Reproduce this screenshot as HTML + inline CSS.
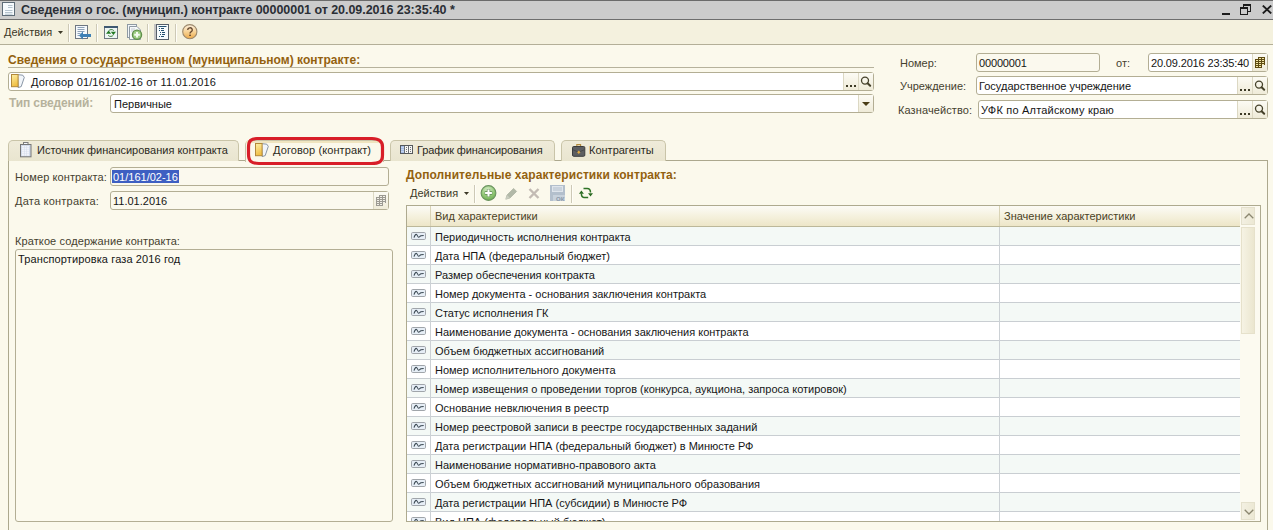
<!DOCTYPE html>
<html><head><meta charset="utf-8">
<style>
*{box-sizing:border-box}
html,body{margin:0;padding:0}
body{width:1273px;height:530px;overflow:hidden;position:relative;background:#fbf9ec;font-family:"Liberation Sans",sans-serif;font-size:11px;color:#1e1e1e}
.a{position:absolute}
.t{position:absolute;white-space:nowrap;line-height:13px}
.sep{position:absolute;width:2px;border-left:1px solid #cdc9b6;border-right:1px solid #fffef8}
.inp{position:absolute;background:#fff;border:1px solid #b3ae94;border-radius:3px;height:19px}
.btn{position:absolute;top:0;bottom:0;width:15px;border-left:1px solid #dcd8c3;background:linear-gradient(#fcfbf4,#efebd8)}
.lbl{color:#45412f}
.val{color:#151515}
.hdr{font-weight:bold;font-size:12px;color:#93610f;letter-spacing:0.03px}
.tab{position:absolute;top:140px;height:21px;border:1px solid #c9c4a8;border-bottom:none;border-radius:5px 5px 0 0;background:linear-gradient(#efebd9,#e9e5cf)}
.tab .t{color:#2b2a22;top:3px}
.row{position:absolute;left:0;width:833px;height:19px;border-bottom:1px solid #c9ced2}
.row .ic{position:absolute;left:4px;top:5px}
.row .tx{position:absolute;left:28px;top:4px;white-space:nowrap;line-height:13px;color:#161616}
.row .c1{position:absolute;left:23px;top:0;bottom:-1px;width:1px;background:#ccd1d5}
.row .c2{position:absolute;left:592px;top:0;bottom:-1px;width:1px;background:#ccd1d5}
</style></head><body>
<div class="a" style="left:0;top:0;width:1273px;height:20px;background:#cccccc;border-top:1px solid #6b6b6b;border-bottom:1px solid #6e6e6e"></div>
<svg class="a" style="left:2px;top:2px" width="13" height="14" viewBox="0 0 13 14">
  <rect x="0.5" y="0.5" width="12" height="13" fill="#f7fbfe" stroke="#5f6d79"/>
  <path d="M6 3.5h4.5M6 5.5h4.5M3 8.5h7.5M3 10.5h7.5M3 12.2h7.5" stroke="#aebdc9" stroke-width="0.9"/>
</svg>
<div class="t" style="left:21px;top:4px;font-weight:bold;font-size:12.5px;color:#2a2e35;letter-spacing:-0.04px">Сведения о гос. (муницип.) контракте 00000001 от 20.09.2016 23:35:40 *</div>
<div class="a" style="left:1222px;top:13px;width:8px;height:2px;background:#1c1c1c"></div>
<div class="a" style="left:1243px;top:4px;width:8px;height:8px;border:1px solid #1c1c1c;border-top-width:2px"></div>
<div class="a" style="left:1240px;top:7px;width:8px;height:8px;border:1px solid #1c1c1c;border-top-width:2px;background:#cccccc"></div>
<svg class="a" style="left:1262px;top:5px" width="10" height="9" viewBox="0 0 10 9"><path d="M0.8 0.6L9.2 8.4M9.2 0.6L0.8 8.4" stroke="#1c1c1c" stroke-width="1.9"/></svg>
<div class="a" style="left:0;top:20px;width:1273px;height:25px;background:#f4f1de;border-bottom:1px solid #b3af98"></div>
<div class="t" style="left:4px;top:26px;color:#3d3928">Действия</div>
<svg class="a" style="left:58px;top:31px" width="5" height="3" viewBox="0 0 5 3"><path d="M0 0h5L2.5 3z" fill="#3d3928"/></svg>
<div class="sep" style="left:68px;top:24px;height:18px"></div>
<svg class="a" style="left:75px;top:25px" width="17" height="16" viewBox="0 0 17 16">
  <rect x="0.5" y="0.5" width="12" height="13" fill="#f5f9fc" stroke="#6e7781"/>
  <path d="M2.5 2.5h7M2.5 4.5h7M2.5 6.5h7M2.5 8.5h3M2.5 10.5h2" stroke="#8ea2b8"/>
  <path d="M4 10.5l4-4v2.5h8v3H8V14.5z" fill="#3e80b5"/>
</svg>
<div class="sep" style="left:96px;top:24px;height:18px"></div>
<svg class="a" style="left:104px;top:26px" width="14" height="13" viewBox="0 0 14 13">
  <rect x="0.5" y="0.5" width="13" height="12" fill="#eef6f4" stroke="#707880"/>
  <rect x="0" y="0" width="14" height="2" fill="#405a72"/>
  <path d="M2 7.8l2.6-3.2 2.6 3.2z M6.8 5.8l2.6 3.2 2.6-3.2z" fill="#237a23"/>
  <path d="M4.6 5a3.4 3.4 0 0 1 5.2-0.4M9.4 9a3.4 3.4 0 0 1-5.2 0.4" stroke="#3d7d3d" fill="none"/>
</svg>
<svg class="a" style="left:127px;top:24px" width="16" height="16" viewBox="0 0 16 16">
  <rect x="0.5" y="0.5" width="9" height="13" fill="#f2f6f9" stroke="#8f9aa3"/>
  <path d="M2.5 2.5H10L13.5 6V15.5H2.5Z" fill="#f7f9fb" stroke="#8f9aa3"/>
  <path d="M4 5h4M4 7h3" stroke="#c5ccd3"/>
  <circle cx="10" cy="10.8" r="4.6" fill="#9ccc82" stroke="#5f8f4b" stroke-width="1.3"/>
  <path d="M10 8v5.6M7.2 10.8h5.6" stroke="#f4fbf0" stroke-width="2"/>
</svg>
<div class="sep" style="left:147px;top:24px;height:18px"></div>
<svg class="a" style="left:154px;top:24px" width="16" height="16" viewBox="0 0 16 16">
  <rect x="0" y="0" width="3" height="16" fill="#c4c4c4"/>
  <rect x="2.5" y="0.5" width="12" height="15" fill="#f7fbfd" stroke="#575f68"/>
  <path d="M4.5 2.5h8M5 4.5h1M7 4.5h3M5 6.5h1M7 6.5h3M6 8.5h1M8 8.5h3M6 10.5h1M8 10.5h3M5 12.5h1M7 12.5h3" stroke="#23506f"/>
</svg>
<div class="sep" style="left:175px;top:24px;height:18px"></div>
<svg class="a" style="left:182px;top:24px" width="16" height="16" viewBox="0 0 16 16">
  <defs><linearGradient id="hg" x1="0" y1="0" x2="0" y2="1"><stop offset="0" stop-color="#fcf0de"/><stop offset="0.55" stop-color="#f6cf8e"/><stop offset="1" stop-color="#eca845"/></linearGradient></defs>
  <circle cx="7.8" cy="7.7" r="7.1" fill="url(#hg)" stroke="#9c896c" stroke-width="1.1"/>
  <path d="M5.7 5.9a2.3 2.1 0 1 1 3.3 1.9c-0.7 0.4-1 0.8-1 1.7" fill="none" stroke="#654830" stroke-width="1.35"/>
  <rect x="7.2" y="10.6" width="1.7" height="1.4" fill="#654830"/>
</svg>
<div class="t hdr" style="left:8px;top:54px">Сведения о государственном (муниципальном) контракте:</div>
<div class="a" style="left:8px;top:67px;width:866px;height:1px;background:#b6b29c"></div>

<div class="inp" style="left:8px;top:72px;width:866px">
  <svg class="a" style="left:2px;top:1px" width="15" height="15" viewBox="0 0 15 15">
    <defs><linearGradient id="fg" x1="0" y1="0" x2="0.3" y2="1"><stop offset="0" stop-color="#fdf0a8"/><stop offset="1" stop-color="#f0bf45"/></linearGradient></defs>
    <path d="M6.5 0.6L11.8 1.2L13.3 3.4L10.2 12.6L7.2 13.6Z" fill="#f1f5fa" stroke="#7d8a9c" stroke-width="0.9"/>
    <rect x="0.5" y="0.5" width="6.6" height="12.2" fill="url(#fg)" stroke="#b3893a"/>
  </svg>
  <div class="t val" style="left:22px;top:3px;letter-spacing:0.13px">Договор 01/161/02-16 от 11.01.2016</div>
  <div class="btn" style="left:834px"><div class="a" style="left:2px;top:12px;width:2px;height:2px;background:#3d3a26"></div><div class="a" style="left:6px;top:12px;width:2px;height:2px;background:#3d3a26"></div><div class="a" style="left:10px;top:12px;width:2px;height:2px;background:#3d3a26"></div></div>
  <div class="btn" style="left:849px"><svg class="a" style="left:1px;top:3px" width="14" height="14" viewBox="0 0 14 14"><circle cx="5" cy="4.6" r="3.5" fill="none" stroke="#45412a" stroke-width="1.3"/><path d="M7.6 7.2L10.2 9.8" stroke="#45412a" stroke-width="2" stroke-linecap="round"/></svg></div>
</div>

<div class="t" style="left:9px;top:97px;font-weight:bold;font-size:12px;letter-spacing:-0.12px;color:#b6b29c">Тип сведений:</div>
<div class="inp" style="left:110px;top:94px;width:764px">
  <div class="t val" style="left:3px;top:3px">Первичные</div>
  <div class="btn" style="left:747px"><svg class="a" style="left:3px;top:7px" width="8" height="4" viewBox="0 0 8 4"><path d="M0 0h8L4 4z" fill="#4a3d16"/></svg></div>
</div>

<div class="t lbl" style="left:900px;top:57px">Номер:</div>
<div class="inp" style="left:976px;top:53px;width:124px;background:#fbf9ee"><div class="t val" style="left:2px;top:3px;letter-spacing:-0.15px">00000001</div></div>
<div class="t lbl" style="left:1116px;top:57px">от:</div>
<div class="inp" style="left:1148px;top:53px;width:120px">
  <div class="t val" style="left:2px;top:3px;letter-spacing:-0.15px">20.09.2016 23:35:40</div>
  <div class="btn" style="left:103px"><svg class="a" style="left:2px;top:3px" width="11" height="12" viewBox="0 0 11 12"><path d="M3 0h7v2h-7zM0 2h10v6h-10zM0 8h7v3h-7z" fill="#5e4b12"/><path d="M4 1h2v1h-2zM7 1h2v1h-2zM1 3h2v1h-2zM4 3h2v1h-2zM7 3h2v1h-2zM1 5h2v1h-2zM4 5h2v1h-2zM7 5h2v1h-2zM1 7h2v1h-2zM4 7h2v1h-2zM7 7h2v1h-2zM1 9h2v1h-2zM4 9h2v1h-2z" fill="#f3e7a6"/></svg></div>
</div>
<div class="t lbl" style="left:900px;top:80px">Учреждение:</div>
<div class="inp" style="left:976px;top:76px;width:292px">
  <div class="t val" style="left:2px;top:3px">Государственное учреждение</div>
  <div class="btn" style="left:260px"><div class="a" style="left:2px;top:12px;width:2px;height:2px;background:#3d3a26"></div><div class="a" style="left:6px;top:12px;width:2px;height:2px;background:#3d3a26"></div><div class="a" style="left:10px;top:12px;width:2px;height:2px;background:#3d3a26"></div></div>
  <div class="btn" style="left:275px"><svg class="a" style="left:1px;top:3px" width="14" height="14" viewBox="0 0 14 14"><circle cx="5" cy="4.6" r="3.5" fill="none" stroke="#45412a" stroke-width="1.3"/><path d="M7.6 7.2L10.2 9.8" stroke="#45412a" stroke-width="2" stroke-linecap="round"/></svg></div>
</div>
<div class="t lbl" style="left:898px;top:104px;letter-spacing:0.1px">Казначейство:</div>
<div class="inp" style="left:978px;top:100px;width:290px">
  <div class="t val" style="left:2px;top:3px;letter-spacing:0.2px">УФК по Алтайскому краю</div>
  <div class="btn" style="left:258px"><div class="a" style="left:2px;top:12px;width:2px;height:2px;background:#3d3a26"></div><div class="a" style="left:6px;top:12px;width:2px;height:2px;background:#3d3a26"></div><div class="a" style="left:10px;top:12px;width:2px;height:2px;background:#3d3a26"></div></div>
  <div class="btn" style="left:273px"><svg class="a" style="left:1px;top:3px" width="14" height="14" viewBox="0 0 14 14"><circle cx="5" cy="4.6" r="3.5" fill="none" stroke="#45412a" stroke-width="1.3"/><path d="M7.6 7.2L10.2 9.8" stroke="#45412a" stroke-width="2" stroke-linecap="round"/></svg></div>
</div>
<div class="a" style="left:8px;top:160px;width:1260px;height:380px;border:1px solid #aca88e;border-bottom:none"></div>
<div class="tab" style="left:8px;width:231px">
  <svg class="a" style="left:11px;top:1px" width="12" height="16" viewBox="0 0 12 16">
    <rect x="3.5" y="0.5" width="4.5" height="2.2" fill="#f4f6fa" stroke="#7c7c7c"/>
    <rect x="0.5" y="2.5" width="10.5" height="12.3" fill="#d3dbea" stroke="#767676"/>
    <path d="M2 4.2h2v1.4h-2zM4.5 4.2h2v1.4h-2zM7 4.2h2v1.4h-2zM2 6.2h2v1.4h-2zM4.5 6.2h2v1.4h-2zM7 6.2h2v1.4h-2zM2 8.2h2v1.4h-2zM4.5 8.2h2v1.4h-2zM7 8.2h2v1.4h-2zM2 10.2h2v1.4h-2zM4.5 10.2h2v1.4h-2zM7 10.2h2v1.4h-2zM2 12.2h2v1.4h-2zM4.5 12.2h2v1.4h-2zM7 12.2h2v1.4h-2z" fill="#fbfcff"/>
  </svg>
  <div class="t" style="left:28px">Источник финансирования контракта</div>
</div>
<div class="tab" style="left:390px;width:165px">
  <svg class="a" style="left:9px;top:4px" width="13" height="9" viewBox="0 0 13 9">
    <rect x="0.5" y="0.5" width="12" height="8" fill="#f7f7f5" stroke="#55595d"/>
    <rect x="1" y="1" width="3" height="7" fill="#a4bce6"/>
    <path d="M1 2.5h3M1 4.5h3M1 6.5h3" stroke="#d2def3" stroke-width="0.7"/>
    <path d="M4.5 1v7M8.5 1v7" stroke="#6a6e72"/>
    <path d="M6 2h1v1h-1zM6 4h1v1h-1zM6 6h1v1h-1zM10 2h1v1h-1zM10 4h1v1h-1zM10 6h1v1h-1z" fill="#72767a"/>
  </svg>
  <div class="t" style="left:26px;letter-spacing:-0.12px">График финансирования</div>
</div>
<div class="tab" style="left:561px;width:105px">
  <svg class="a" style="left:10px;top:2px" width="14" height="15" viewBox="0 0 14 15">
    <path d="M4.8 3.6v-2h3.8v2" fill="none" stroke="#b28a3c" stroke-width="1.1"/>
    <rect x="0.5" y="3.5" width="12.3" height="9.8" rx="1.2" fill="#5c5e61" stroke="#3b3c3e"/>
    <path d="M1 6.8l5.6 2.4 5.6-2.4" fill="none" stroke="#46484a"/>
    <rect x="5.6" y="8" width="2.4" height="2.4" fill="#e0a940" transform="rotate(45 6.8 9.2)"/>
  </svg>
  <div class="t" style="left:27px">Контрагенты</div>
</div>
<div class="tab" style="left:245px;width:139px;height:22px;background:#fbf8ea;border-color:#c9c4a8;z-index:2">
  <div class="a" style="left:0;top:0;right:0;height:2px;background:#efe4bf"></div>
  <svg class="a" style="left:9px;top:2px" width="15" height="15" viewBox="0 0 15 15">
    <defs><linearGradient id="fg2" x1="0" y1="0" x2="0.3" y2="1"><stop offset="0" stop-color="#fdf0a8"/><stop offset="1" stop-color="#f0bf45"/></linearGradient></defs>
    <path d="M6.5 0.6L11.8 1.2L13.3 3.4L10.2 12.6L7.2 13.6Z" fill="#f1f5fa" stroke="#7d8a9c" stroke-width="0.9"/>
    <rect x="0.5" y="0.5" width="6.6" height="12.2" fill="url(#fg2)" stroke="#b3893a"/>
  </svg>
  <div class="t" style="left:27px;letter-spacing:0.1px">Договор (контракт)</div>
</div>
<svg class="a" style="left:245px;top:135px;z-index:5" width="142" height="33" viewBox="0 0 142 33">
  <path d="M12 3.5H127C134 3.5 137.5 6 137.5 12V20C137.5 27 134 28.5 126 28.5H14C6 28.5 3.5 26 3.5 19V12C3.5 6 6 3.5 12 3.5z" fill="none" stroke="#d81e28" stroke-width="3.2"/>
</svg>
<div class="t lbl" style="left:15px;top:171px;letter-spacing:0.1px">Номер контракта:</div>
<div class="inp" style="left:110px;top:167px;width:279px;background:#fbf9ee">
  <div class="a" style="left:1px;top:2px;width:67px;height:13px;background:#3e5fc2"></div>
  <div class="t" style="left:2px;top:3px;color:#fff">01/161/02-16</div>
</div>
<div class="t lbl" style="left:15px;top:195px;letter-spacing:0.22px">Дата контракта:</div>
<div class="inp" style="left:110px;top:191px;width:279px;background:#fbf9ee">
  <div class="t val" style="left:2px;top:3px">11.01.2016</div>
  <div class="btn" style="left:262px"><svg class="a" style="left:2px;top:3px" width="11" height="12" viewBox="0 0 11 12"><path d="M3 0h7v2h-7zM0 2h10v6h-10zM0 8h7v3h-7z" fill="#9c9a92"/><path d="M4 1h2v1h-2zM7 1h2v1h-2zM1 3h2v1h-2zM4 3h2v1h-2zM7 3h2v1h-2zM1 5h2v1h-2zM4 5h2v1h-2zM7 5h2v1h-2zM1 7h2v1h-2zM4 7h2v1h-2zM7 7h2v1h-2zM1 9h2v1h-2zM4 9h2v1h-2z" fill="#f2f0e8"/></svg></div>
</div>
<div class="t lbl" style="left:15px;top:235px;letter-spacing:0.1px">Краткое содержание контракта:</div>
<div class="inp" style="left:15px;top:249px;width:378px;height:273px;background:#fcfaee">
  <div class="t val" style="left:2px;top:3px;letter-spacing:0.12px">Транспортировка газа 2016 год</div>
</div>
<div class="t hdr" style="left:406px;top:169px;letter-spacing:0.08px">Дополнительные характеристики контракта:</div>
<div class="t" style="left:410px;top:187px;color:#3d3928">Действия</div>
<svg class="a" style="left:464px;top:192px" width="5" height="3" viewBox="0 0 5 3"><path d="M0 0h5L2.5 3z" fill="#3d3928"/></svg>
<div class="sep" style="left:474px;top:185px;height:18px"></div>
<svg class="a" style="left:480px;top:185px" width="17" height="17" viewBox="0 0 17 17">
  <defs><radialGradient id="gg" cx="0.45" cy="0.3" r="0.8"><stop offset="0" stop-color="#d8efcb"/><stop offset="0.6" stop-color="#8cc46f"/><stop offset="1" stop-color="#5d9f48"/></radialGradient></defs>
  <circle cx="8.5" cy="8" r="7.4" fill="url(#gg)" stroke="#6b9360" stroke-width="1.1"/>
  <path d="M8.5 4.2v7.6M4.7 8h7.6" stroke="#5e8a52" stroke-width="3.4"/>
  <path d="M8.5 4.6v6.8M5.1 8h6.8" stroke="#ffffff" stroke-width="2.1"/>
</svg>
<svg class="a" style="left:505px;top:187px" width="13" height="13" viewBox="0 0 13 13">
  <path d="M0.8 12.2l1.2-4.2 6.6-6.6 3 3L5 11z" fill="#b2b9a8" stroke="#a3aa98" stroke-width="0.6"/>
  <path d="M0.8 12.2l1.2-4.2 3 3z" fill="#c9cdbf"/>
</svg>
<svg class="a" style="left:528px;top:188px" width="12" height="11" viewBox="0 0 12 11">
  <path d="M1.5 1l9 9M10.5 1l-9 9" stroke="#c3bbb4" stroke-width="2.4"/>
</svg>
<svg class="a" style="left:550px;top:185px" width="15" height="16" viewBox="0 0 15 16">
  <rect x="0" y="0" width="15" height="16" fill="#b3bfcc"/>
  <rect x="2" y="1" width="11" height="6" fill="#dfe5ec"/>
  <path d="M3 3h9M3 5h9" stroke="#b3bfcc"/>
  <rect x="3" y="10" width="12" height="6" fill="#c8d2dc"/>
  <text x="6" y="15.5" font-family="Liberation Sans" font-size="6" font-weight="bold" fill="#8a98a8">ОК</text>
</svg>
<div class="sep" style="left:571px;top:185px;height:18px"></div>
<svg class="a" style="left:578px;top:185px" width="16" height="15" viewBox="0 0 16 15">
  <path d="M5.5 3.4H9.2Q12.5 3.4 12.5 7.6M3.4 8.6Q3.4 12.4 5.8 12.4H10.2" fill="none" stroke="#2f7326" stroke-width="1.5"/>
  <path d="M10 8.2h5l-2.5 3.2zM0.9 8.8h5L3.4 5.4z" fill="#2a6a22"/>
</svg>
<div class="a" style="left:406px;top:205px;width:855px;height:317px;border:1px solid #aeaa8f;background:#fcfaf0;overflow:hidden">
  <div class="a" style="left:0;top:0;width:833px;height:21px;background:linear-gradient(#fcfbf6,#f5f1de 50%,#ede6c8);border-bottom:1px solid #bcb89a">
    <div class="a" style="left:23px;top:0;width:1px;height:20px;background:#d9d3b6"></div>
    <div class="a" style="left:592px;top:0;width:1px;height:20px;background:#d9d3b6"></div>
    <div class="t" style="left:28px;top:4px;color:#4b4226">Вид характеристики</div>
    <div class="t" style="left:597px;top:4px;color:#4b4226">Значение характеристики</div>
  </div>
  <div class="row" style="top:21px;background:#f4f9f6"><svg class="ic" width="15" height="8" viewBox="0 0 15 8"><rect x="0.5" y="0.5" width="14" height="7" rx="1.2" fill="#e6eef6" stroke="#a0a5aa"/><path d="M3 5.6C3.8 3 4.7 2.2 5.5 2.4S6.8 5.4 7.6 5.3S9 4 10 3.7L12.7 3.4" fill="none" stroke="#3a4852" stroke-width="1.05"/></svg><div class="c1"></div><div class="c2"></div><div class="tx">Периодичность исполнения контракта</div></div>
  <div class="row" style="top:40px;background:#ffffff"><svg class="ic" width="15" height="8" viewBox="0 0 15 8"><rect x="0.5" y="0.5" width="14" height="7" rx="1.2" fill="#e6eef6" stroke="#a0a5aa"/><path d="M3 5.6C3.8 3 4.7 2.2 5.5 2.4S6.8 5.4 7.6 5.3S9 4 10 3.7L12.7 3.4" fill="none" stroke="#3a4852" stroke-width="1.05"/></svg><div class="c1"></div><div class="c2"></div><div class="tx">Дата НПА (федеральный бюджет)</div></div>
  <div class="row" style="top:59px;background:#f4f9f6"><svg class="ic" width="15" height="8" viewBox="0 0 15 8"><rect x="0.5" y="0.5" width="14" height="7" rx="1.2" fill="#e6eef6" stroke="#a0a5aa"/><path d="M3 5.6C3.8 3 4.7 2.2 5.5 2.4S6.8 5.4 7.6 5.3S9 4 10 3.7L12.7 3.4" fill="none" stroke="#3a4852" stroke-width="1.05"/></svg><div class="c1"></div><div class="c2"></div><div class="tx">Размер обеспечения контракта</div></div>
  <div class="row" style="top:78px;background:#ffffff"><svg class="ic" width="15" height="8" viewBox="0 0 15 8"><rect x="0.5" y="0.5" width="14" height="7" rx="1.2" fill="#e6eef6" stroke="#a0a5aa"/><path d="M3 5.6C3.8 3 4.7 2.2 5.5 2.4S6.8 5.4 7.6 5.3S9 4 10 3.7L12.7 3.4" fill="none" stroke="#3a4852" stroke-width="1.05"/></svg><div class="c1"></div><div class="c2"></div><div class="tx">Номер документа - основания заключения контракта</div></div>
  <div class="row" style="top:97px;background:#f4f9f6"><svg class="ic" width="15" height="8" viewBox="0 0 15 8"><rect x="0.5" y="0.5" width="14" height="7" rx="1.2" fill="#e6eef6" stroke="#a0a5aa"/><path d="M3 5.6C3.8 3 4.7 2.2 5.5 2.4S6.8 5.4 7.6 5.3S9 4 10 3.7L12.7 3.4" fill="none" stroke="#3a4852" stroke-width="1.05"/></svg><div class="c1"></div><div class="c2"></div><div class="tx">Статус исполнения ГК</div></div>
  <div class="row" style="top:116px;background:#ffffff"><svg class="ic" width="15" height="8" viewBox="0 0 15 8"><rect x="0.5" y="0.5" width="14" height="7" rx="1.2" fill="#e6eef6" stroke="#a0a5aa"/><path d="M3 5.6C3.8 3 4.7 2.2 5.5 2.4S6.8 5.4 7.6 5.3S9 4 10 3.7L12.7 3.4" fill="none" stroke="#3a4852" stroke-width="1.05"/></svg><div class="c1"></div><div class="c2"></div><div class="tx">Наименование документа - основания заключения контракта</div></div>
  <div class="row" style="top:135px;background:#f4f9f6"><svg class="ic" width="15" height="8" viewBox="0 0 15 8"><rect x="0.5" y="0.5" width="14" height="7" rx="1.2" fill="#e6eef6" stroke="#a0a5aa"/><path d="M3 5.6C3.8 3 4.7 2.2 5.5 2.4S6.8 5.4 7.6 5.3S9 4 10 3.7L12.7 3.4" fill="none" stroke="#3a4852" stroke-width="1.05"/></svg><div class="c1"></div><div class="c2"></div><div class="tx">Объем бюджетных ассигнований</div></div>
  <div class="row" style="top:154px;background:#ffffff"><svg class="ic" width="15" height="8" viewBox="0 0 15 8"><rect x="0.5" y="0.5" width="14" height="7" rx="1.2" fill="#e6eef6" stroke="#a0a5aa"/><path d="M3 5.6C3.8 3 4.7 2.2 5.5 2.4S6.8 5.4 7.6 5.3S9 4 10 3.7L12.7 3.4" fill="none" stroke="#3a4852" stroke-width="1.05"/></svg><div class="c1"></div><div class="c2"></div><div class="tx">Номер исполнительного документа</div></div>
  <div class="row" style="top:173px;background:#f4f9f6"><svg class="ic" width="15" height="8" viewBox="0 0 15 8"><rect x="0.5" y="0.5" width="14" height="7" rx="1.2" fill="#e6eef6" stroke="#a0a5aa"/><path d="M3 5.6C3.8 3 4.7 2.2 5.5 2.4S6.8 5.4 7.6 5.3S9 4 10 3.7L12.7 3.4" fill="none" stroke="#3a4852" stroke-width="1.05"/></svg><div class="c1"></div><div class="c2"></div><div class="tx">Номер извещения о проведении торгов (конкурса, аукциона, запроса котировок)</div></div>
  <div class="row" style="top:192px;background:#ffffff"><svg class="ic" width="15" height="8" viewBox="0 0 15 8"><rect x="0.5" y="0.5" width="14" height="7" rx="1.2" fill="#e6eef6" stroke="#a0a5aa"/><path d="M3 5.6C3.8 3 4.7 2.2 5.5 2.4S6.8 5.4 7.6 5.3S9 4 10 3.7L12.7 3.4" fill="none" stroke="#3a4852" stroke-width="1.05"/></svg><div class="c1"></div><div class="c2"></div><div class="tx">Основание невключения в реестр</div></div>
  <div class="row" style="top:211px;background:#f4f9f6"><svg class="ic" width="15" height="8" viewBox="0 0 15 8"><rect x="0.5" y="0.5" width="14" height="7" rx="1.2" fill="#e6eef6" stroke="#a0a5aa"/><path d="M3 5.6C3.8 3 4.7 2.2 5.5 2.4S6.8 5.4 7.6 5.3S9 4 10 3.7L12.7 3.4" fill="none" stroke="#3a4852" stroke-width="1.05"/></svg><div class="c1"></div><div class="c2"></div><div class="tx">Номер реестровой записи в реестре государственных заданий</div></div>
  <div class="row" style="top:230px;background:#ffffff"><svg class="ic" width="15" height="8" viewBox="0 0 15 8"><rect x="0.5" y="0.5" width="14" height="7" rx="1.2" fill="#e6eef6" stroke="#a0a5aa"/><path d="M3 5.6C3.8 3 4.7 2.2 5.5 2.4S6.8 5.4 7.6 5.3S9 4 10 3.7L12.7 3.4" fill="none" stroke="#3a4852" stroke-width="1.05"/></svg><div class="c1"></div><div class="c2"></div><div class="tx">Дата регистрации НПА (федеральный бюджет) в Минюсте РФ</div></div>
  <div class="row" style="top:249px;background:#f4f9f6"><svg class="ic" width="15" height="8" viewBox="0 0 15 8"><rect x="0.5" y="0.5" width="14" height="7" rx="1.2" fill="#e6eef6" stroke="#a0a5aa"/><path d="M3 5.6C3.8 3 4.7 2.2 5.5 2.4S6.8 5.4 7.6 5.3S9 4 10 3.7L12.7 3.4" fill="none" stroke="#3a4852" stroke-width="1.05"/></svg><div class="c1"></div><div class="c2"></div><div class="tx">Наименование нормативно-правового акта</div></div>
  <div class="row" style="top:268px;background:#ffffff"><svg class="ic" width="15" height="8" viewBox="0 0 15 8"><rect x="0.5" y="0.5" width="14" height="7" rx="1.2" fill="#e6eef6" stroke="#a0a5aa"/><path d="M3 5.6C3.8 3 4.7 2.2 5.5 2.4S6.8 5.4 7.6 5.3S9 4 10 3.7L12.7 3.4" fill="none" stroke="#3a4852" stroke-width="1.05"/></svg><div class="c1"></div><div class="c2"></div><div class="tx">Объем бюджетных ассигнований муниципального образования</div></div>
  <div class="row" style="top:287px;background:#f4f9f6"><svg class="ic" width="15" height="8" viewBox="0 0 15 8"><rect x="0.5" y="0.5" width="14" height="7" rx="1.2" fill="#e6eef6" stroke="#a0a5aa"/><path d="M3 5.6C3.8 3 4.7 2.2 5.5 2.4S6.8 5.4 7.6 5.3S9 4 10 3.7L12.7 3.4" fill="none" stroke="#3a4852" stroke-width="1.05"/></svg><div class="c1"></div><div class="c2"></div><div class="tx">Дата регистрации НПА (субсидии) в Минюсте РФ</div></div>
  <div class="row" style="top:306px;background:#ffffff"><svg class="ic" width="15" height="8" viewBox="0 0 15 8"><rect x="0.5" y="0.5" width="14" height="7" rx="1.2" fill="#e6eef6" stroke="#a0a5aa"/><path d="M3 5.6C3.8 3 4.7 2.2 5.5 2.4S6.8 5.4 7.6 5.3S9 4 10 3.7L12.7 3.4" fill="none" stroke="#3a4852" stroke-width="1.05"/></svg><div class="c1"></div><div class="c2"></div><div class="tx">Вид НПА (федеральный бюджет)</div></div>
  <div class="a" style="left:834px;top:0;width:20px;height:316px;background:#fcfaf0"></div>
  <div class="a" style="left:834px;top:1px;width:14px;height:18px;background:linear-gradient(90deg,#f3f0e2,#ece8d4);border:1px solid #e4e0cc">
    <svg class="a" style="left:2px;top:5px" width="10" height="6" viewBox="0 0 10 6"><path d="M0.7 5.3L5 1l4.3 4.3" fill="none" stroke="#8b8770" stroke-width="1.3"/></svg>
  </div>
  <div class="a" style="left:834px;top:21px;width:14px;height:107px;background:linear-gradient(90deg,#f6f3e4,#ebe6cf);border:1px solid #e6e1cb"></div>
  <div class="a" style="left:834px;top:296px;width:14px;height:18px;background:linear-gradient(90deg,#f3f0e2,#ece8d4);border:1px solid #e4e0cc">
    <svg class="a" style="left:2px;top:6px" width="10" height="6" viewBox="0 0 10 6"><path d="M0.7 0.7L5 5l4.3-4.3" fill="none" stroke="#8b8770" stroke-width="1.3"/></svg>
  </div>
</div>
</body></html>
